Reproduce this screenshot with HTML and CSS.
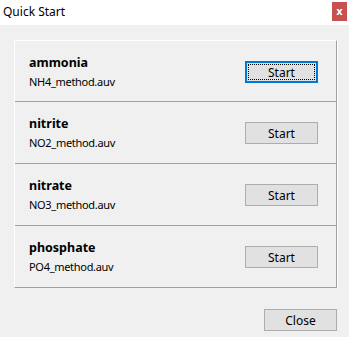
FILE: index.html
```html
<!DOCTYPE html>
<html lang="en">
<head>
    <meta charset="UTF-8">
    <title>Quick Start</title>
    <link rel="stylesheet" href="styles.css">
</head>
<body>
    <div class="window">
        <div class="title-bar">
            <span class="title">Quick Start</span>
            <button class="title-close">x</button>
        </div>

        <div class="content">
            <div class="method-list">
                <div class="method-row">
                    <div class="method-info">
                        <div class="method-name">ammonia</div>
                        <div class="method-file">NH4_method.auv</div>
                    </div>
                    <button class="win-button focused"><span>Start</span></button>
                </div>
                <div class="method-row">
                    <div class="method-info">
                        <div class="method-name">nitrite</div>
                        <div class="method-file">NO2_method.auv</div>
                    </div>
                    <button class="win-button"><span>Start</span></button>
                </div>
                <div class="method-row">
                    <div class="method-info">
                        <div class="method-name">nitrate</div>
                        <div class="method-file">NO3_method.auv</div>
                    </div>
                    <button class="win-button"><span>Start</span></button>
                </div>
                <div class="method-row">
                    <div class="method-info">
                        <div class="method-name">phosphate</div>
                        <div class="method-file">PO4_method.auv</div>
                    </div>
                    <button class="win-button"><span>Start</span></button>
                </div>
            </div>

            <div class="dialog-footer">
                <button class="win-button"><span>Close</span></button>
            </div>
        </div>
    </div>
</body>
</html>
```

FILE: styles.css
```css
* {
    margin: 0;
    padding: 0;
    box-sizing: border-box;
}

body {
    font-family: "Noto Sans", "Open Sans", sans-serif;
    background-color: #f0f0f0;
    width: 349px;
    height: 337px;
    overflow: hidden;
}

.window {
    display: flex;
    flex-direction: column;
    height: 100%;
}

.title-bar {
    height: 25px;
    background-color: #fff;
    display: flex;
    align-items: flex-start;
    justify-content: space-between;
    padding: 0 2px 0 3px;
}

.title {
    font-size: 12px;
    color: #000;
    line-height: 24px;
}

.title-close {
    margin-top: 2px;
    width: 15px;
    height: 19px;
    background-color: #c75050;
    border: none;
    color: #fff;
    font-family: "DejaVu Sans", sans-serif;
    font-weight: bold;
    font-size: 10px;
    line-height: 17px;
}

.content {
    flex: 1;
    padding: 15px 12px 0 14px;
}

.method-list {
    border-top: 1px solid #fff;
    border-left: 1px solid #fff;
    border-right: 1px solid #a0a0a0;
    border-bottom: 1px solid #a0a0a0;
    box-shadow: 1px 0 0 #fff;
}

.method-row {
    height: 62px;
    display: flex;
    align-items: flex-start;
    justify-content: space-between;
    padding: 14px 18px 0 14px;
    border-bottom: 1px solid #a0a0a0;
}

.method-row:first-child {
    height: 61px;
}

.method-row:last-child {
    height: 61px;
    border-bottom: none;
}

.method-info {
    display: flex;
    flex-direction: column;
    gap: 4px;
}

.method-name {
    font-size: 12.5px;
    font-weight: bold;
    color: #000;
    line-height: 16px;
}

.method-file {
    font-size: 11px;
    letter-spacing: -0.3px;
    color: #000;
    line-height: 14px;
}

.method-row .win-button {
    margin-top: 6px;
}

.win-button {
    width: 73px;
    height: 22px;
    background-color: #e1e1e1;
    border: 1px solid #adadad;
    font-family: "Noto Sans", sans-serif;
    font-size: 12px;
    color: #000;
    display: flex;
    align-items: center;
    justify-content: center;
}

.win-button.focused {
    border: 2px solid #0078d7;
    padding: 1px;
}

.win-button.focused span {
    flex: 1;
    align-self: stretch;
    display: flex;
    align-items: center;
    justify-content: center;
    border: 1px dotted #000;
}

.dialog-footer {
    display: flex;
    justify-content: flex-end;
    padding-top: 21px;
}
```
